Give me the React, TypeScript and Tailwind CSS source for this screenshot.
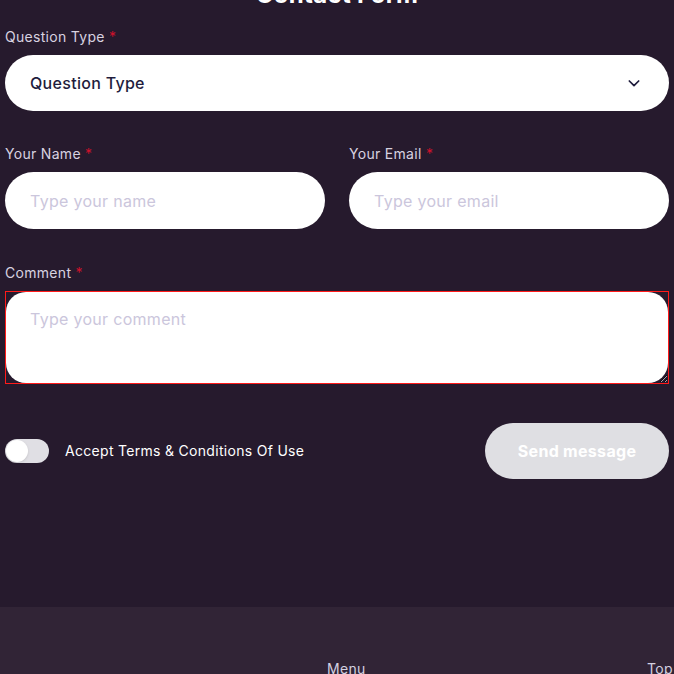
import React from 'react';

const font = { fontFamily: 'Inter, "Noto Sans", sans-serif' };

const Label: React.FC<{ children: React.ReactNode }> = ({ children }) => (
    <label className="block mb-2 text-sm leading-5 text-[#d8d2e0]">
        {children} <span className="text-[#d0112b]">*</span>
    </label>
);

export default function App() {
    return (
        <div className="min-h-[674px] bg-[#261a2d] overflow-hidden tracking-[0.3px]" style={font}>
            <section className="px-[5px] pb-[128px]">
                <h2 className="-mt-[21px] text-center text-2xl leading-8 font-bold text-white">Contact Form</h2>

                <div className="mt-[16px]">
                    <Label>Question Type</Label>
                    <div className="flex h-[56px] items-center justify-between rounded-full bg-white pl-[25px] pr-[27px] pb-[1px]">
                        <span className="text-base font-medium text-[#1f1d3d]">Question Type</span>
                        <svg width="16" height="16" viewBox="0 0 24 24" fill="none" stroke="#1f1d3d" strokeWidth="2.6" strokeLinecap="round" strokeLinejoin="round">
                            <path d="M5 9l7 7 7-7" />
                        </svg>
                    </div>
                </div>

                <div className="mt-[33px] grid grid-cols-2 gap-6">
                    <div>
                        <Label>Your Name</Label>
                        <input
                            placeholder="Type your name"
                            className="h-[57px] w-full rounded-full bg-white px-[25px] text-base text-[#1f1d3d] placeholder:text-[#cbc6dc] outline-none"
                        />
                    </div>
                    <div>
                        <Label>Your Email</Label>
                        <input
                            placeholder="Type your email"
                            className="h-[57px] w-full rounded-full bg-white px-[25px] text-base text-[#1f1d3d] placeholder:text-[#cbc6dc] outline-none"
                        />
                    </div>
                </div>

                <div className="mt-[34px]">
                    <Label>Comment</Label>
                    <div className="border border-[#ff1a1a] flex">
                        <textarea
                            placeholder="Type your comment"
                            className="h-[91px] w-full rounded-[20px] bg-white px-[24px] pt-[15px] text-base text-[#1f1d3d] placeholder:text-[#cbc6dc] outline-none"
                        />
                    </div>
                </div>

                <div className="mt-[39px] flex items-center justify-between">
                    <div className="flex items-center gap-4">
                        <span className="flex h-6 w-11 items-center rounded-full bg-[#e0dfe4] px-[1px]">
                            <span className="h-[22px] w-[22px] rounded-full bg-white shadow" />
                        </span>
                        <span className="text-sm text-white">Accept Terms &amp; Conditions Of Use</span>
                    </div>
                    <button className="h-[56px] w-[184px] rounded-full bg-[#dfdfe3] text-base font-bold text-white">
                        Send message
                    </button>
                </div>
            </section>

            <footer className="bg-[#312436] pt-[52px] px-[5px] grid grid-cols-[322px_320px_1fr] text-sm text-[#d4d1e0]">
                <div />
                <div>Menu</div>
                <div>Top</div>
            </footer>
        </div>
    );
}
